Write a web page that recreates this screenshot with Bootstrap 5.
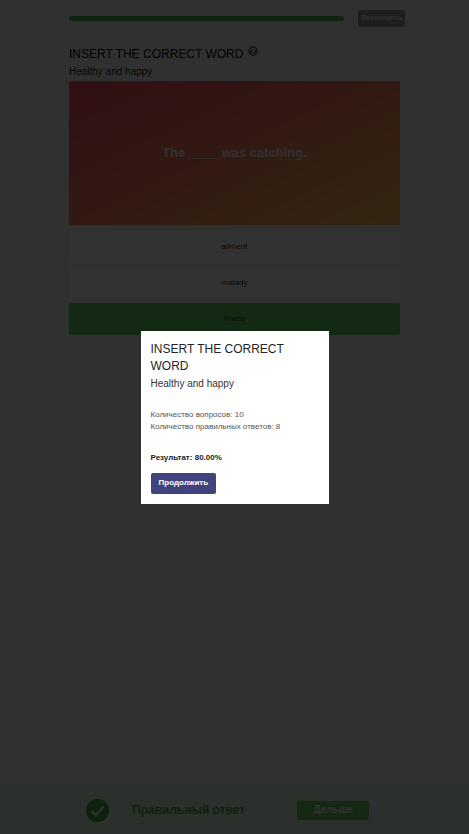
<!DOCTYPE html>
<html lang="ru">
<head>
<meta charset="utf-8">
<meta name="viewport" content="width=device-width, initial-scale=1">
<title>Insert the correct word</title>
<link href="https://cdn.jsdelivr.net/npm/bootstrap@5.3.0/dist/css/bootstrap.min.css" rel="stylesheet">
<style>
body{background:#f0f0f0;color:#212529;font-family:"Liberation Sans",Arial,sans-serif;font-size:8px;line-height:12px}
.quiz{width:100%;padding:0 14.7%}
.quiz-top{padding-top:10px;margin-right:-5px;gap:14px}
.progress{height:5px;border-radius:3px;background:#ddd}
.progress-bar{background:#50b450}
.btn{font-size:8px;line-height:12px;font-weight:700;border:0;border-radius:2px;color:#fff}
.btn-finish{background:#969696;color:#e6e6e6;padding:2px 3px 3px;height:17px}
.heading{font-size:12px;line-height:17px;margin:0;font-weight:400;color:#212529}
.sub{font-size:10px;line-height:17px;margin:0;color:#333}
.quiz .heading{color:#000}
.quiz .sub{color:#222}
.quiz-title{padding-top:19px;gap:5px}
.help{width:10px;height:10px;margin-top:-7px}
.question{height:144px;border-radius:2px;background:linear-gradient(155deg,#f05064 0%,#fa785a 45%,#ffbe55 100%);color:#f0f0f0;font-size:13px;font-weight:700;margin-top:1px}
.answers{padding-top:6px;gap:4px}
.answer{height:32px;background:#fafafa;border-radius:2px;font-weight:400;color:#333;padding:0}
.answer-right{background:#64cd64;color:#285028}
.verdict{background:#d7f0dc;border-top:1px solid #d2c8c8;height:49px;padding:0 100px 0 86px;color:#46a046}
.verdict-text{font-size:12px;font-weight:700;line-height:18px;margin-left:23px}
.btn-next{width:72px;height:19px;background:#64cd64;color:#f0f0f0;font-size:10px;padding:0}
.modal{background:rgba(0,0,0,.8)}
.modal-dialog{width:188px;margin:0 auto;min-height:100%}
.modal-content{border:0;border-radius:0;padding:10px;background:#fff}
.stats{margin:17px 0 0;color:#555}
.result{margin:19px 0 0;font-weight:700;color:#222}
.btn-continue{background:#41437d;margin-top:9px;padding:4px 8px 5px;height:21px}
.btn-continue:hover{background:#343668;color:#fff}
</style>
</head>
<body>
<div class="min-vh-100 d-flex flex-column">
  <main class="quiz flex-grow-1">
    <div class="quiz-top d-flex align-items-center">
      <div class="progress flex-grow-1" role="progressbar" aria-label="Прогресс" aria-valuenow="100" aria-valuemin="0" aria-valuemax="100"><div class="progress-bar w-100"></div></div>
      <button type="button" class="btn btn-finish">Закончить</button>
    </div>
    <div class="quiz-title d-flex align-items-center">
      <h1 class="heading">INSERT THE CORRECT WORD</h1>
      <svg class="help" viewBox="0 0 16 16" role="img" aria-label="Помощь"><circle cx="8" cy="8" r="8" fill="#777"/><path d="M5.5 6.2C5.5 2.8 10.5 3 10.5 6c0 1.7-2.4 1.8-2.4 3.8M8.1 11v2" fill="none" stroke="#f0f0f0" stroke-width="2"/></svg>
    </div>
    <p class="sub">Healthy and happy</p>
    <div class="question d-flex align-items-center justify-content-center">The ____ was catching.</div>
    <div class="answers d-flex flex-column">
      <button type="button" class="btn answer">ailment</button>
      <button type="button" class="btn answer">malady</button>
      <button type="button" class="btn answer answer-right">illness</button>
    </div>
  </main>
  <footer class="verdict d-flex align-items-center">
    <svg width="23" height="23" viewBox="0 0 24 24" aria-hidden="true"><circle cx="12" cy="12" r="12" fill="#46a046"/><path d="M5.5 12.5l4.5 4.5 8.5-9" fill="none" stroke="#d7f0dc" stroke-width="2.6"/></svg>
    <span class="verdict-text">Правильный ответ</span>
    <button type="button" class="btn btn-next ms-auto">Дальше</button>
  </footer>
</div>
<div class="modal d-block" tabindex="-1" role="dialog" aria-modal="true" aria-labelledby="result-title">
  <div class="modal-dialog modal-dialog-centered">
    <div class="modal-content">
      <h2 class="heading" id="result-title">INSERT THE CORRECT WORD</h2>
      <p class="sub">Healthy and happy</p>
      <p class="stats">Количество вопросов: 10<br>Количество правильных ответов: 8</p>
      <p class="result">Результат: 80.00%</p>
      <button type="button" class="btn btn-continue align-self-start">Продолжить</button>
    </div>
  </div>
</div>
<script src="https://cdn.jsdelivr.net/npm/bootstrap@5.3.0/dist/js/bootstrap.bundle.min.js"></script>
</body>
</html>
